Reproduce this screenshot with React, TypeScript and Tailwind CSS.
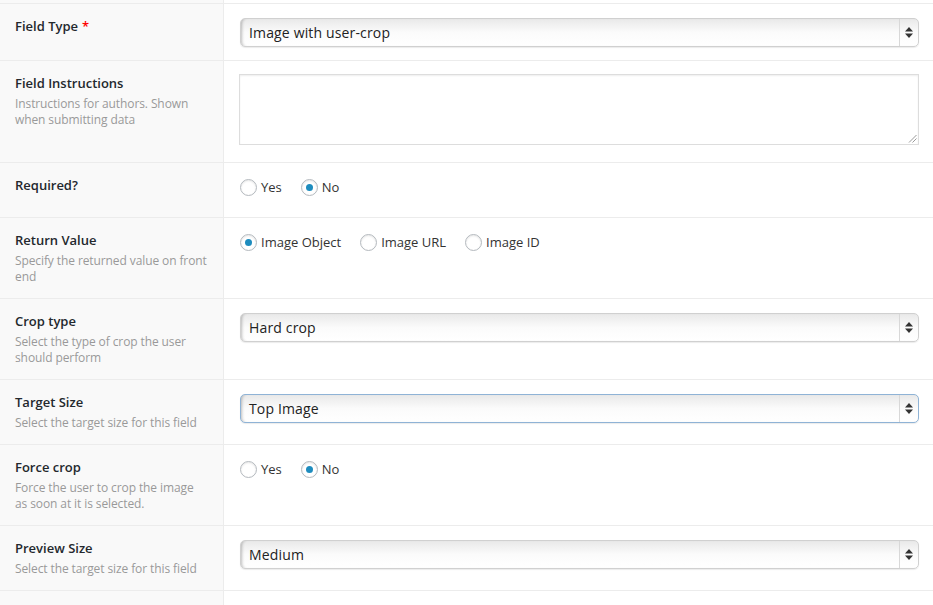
import React from "react";

const font = { fontFamily: '"Open Sans", "Liberation Sans", Arial, sans-serif' };

function Select({ value, focus }: { value: string; focus?: boolean }) {
  return (
    <div
      className={
        "flex h-[29px] w-[679px] items-stretch rounded-[5px] border bg-gradient-to-b from-[#e9e9e9] via-[#fbfbfb] to-[#ffffff] shadow-[inset_3px_0_3px_-2px_rgba(0,0,0,0.25),0_1px_1px_rgba(0,0,0,0.08)] " +
        (focus ? "border-[#8fb3d6] shadow-[0_0_2px_rgba(30,140,190,0.6)]" : "border-[#d0d0d0]")
      }
    >
      <div className="flex flex-1 items-center pb-[1px] pl-[8px] text-[14px] tracking-[0.15px] text-[#222]">{value}</div>
      <div className="flex w-[19px] flex-col items-center justify-center border-l border-[#d8d8d8]">
        <svg width="8" height="11" viewBox="0 0 8 11">
          <path d="M4 0 L8 4.5 L0 4.5 Z" fill="#333" />
          <path d="M0 6.5 L8 6.5 L4 11 Z" fill="#333" />
        </svg>
      </div>
    </div>
  );
}

function Radio({ label, checked }: { label: string; checked?: boolean }) {
  return (
    <div className="flex items-center gap-[4px]">
      <span className="flex h-[17px] w-[17px] items-center justify-center rounded-full border border-[#b4b9be] bg-white shadow-[inset_0_1px_2px_rgba(0,0,0,0.1)]">
        {checked && <span className="h-[7px] w-[7px] rounded-full bg-[#1e8cbe]" />}
      </span>
      <span className="text-[13px] text-[#333]">{label}</span>
    </div>
  );
}

type Row = {
  h: string;
  label: string;
  req?: boolean;
  desc?: string[];
  content: React.ReactNode;
  pt: string;
};

function RadioGroup({ items, checked }: { items: string[]; checked: number }) {
  return (
    <div className="flex items-center gap-[19px]">
      {items.map((t, i) => (
        <Radio key={t} label={t} checked={i === checked} />
      ))}
    </div>
  );
}

export default function App() {
  const rows: Row[] = [
    { h: "h-[56px]", label: "Field Type", req: true, pt: "pt-[14px]", content: <Select value="Image with user-crop" /> },
    {
      h: "h-[101px]",
      label: "Field Instructions",
      desc: ["Instructions for authors. Shown", "when submitting data"],
      pt: "pt-[13px]",
      content: (
        <div className="relative -ml-px h-[71px] w-[680px] border border-[#dddddd] bg-white shadow-[inset_0_1px_2px_rgba(0,0,0,0.07)]">
          <svg className="absolute bottom-[1px] right-[1px]" width="9" height="9" viewBox="0 0 9 9">
            <path d="M8.5 1 L1 8.5 M8.5 4.5 L4.5 8.5" stroke="#999" strokeWidth="1" />
          </svg>
        </div>
      ),
    },
    { h: "h-[54px]", label: "Required?", pt: "pt-[15px]", content: <RadioGroup items={["Yes", "No"]} checked={1} /> },
    {
      h: "h-[80px]",
      label: "Return Value",
      desc: ["Specify the returned value on front", "end"],
      pt: "pt-[15px]",
      content: <RadioGroup items={["Image Object", "Image URL", "Image ID"]} checked={0} />,
    },
    {
      h: "h-[80px]",
      label: "Crop type",
      desc: ["Select the type of crop the user", "should perform"],
      pt: "pt-[14px]",
      content: <Select value="Hard crop" />,
    },
    {
      h: "h-[64px]",
      label: "Target Size",
      desc: ["Select the target size for this field"],
      pt: "pt-[14px]",
      content: <Select value="Top Image" focus />,
    },
    {
      h: "h-[80px]",
      label: "Force crop",
      desc: ["Force the user to crop the image", "as soon at it is selected."],
      pt: "pt-[15px]",
      content: <RadioGroup items={["Yes", "No"]} checked={1} />,
    },
    {
      h: "h-[64px]",
      label: "Preview Size",
      desc: ["Select the target size for this field"],
      pt: "pt-[14px]",
      content: <Select value="Medium" />,
    },
  ];

  return (
    <div className="h-[605px] w-[933px] overflow-hidden bg-white" style={font}>
      <div className="flex h-[3px]">
        <div className="w-[224px] border-r border-[#ececec] bg-[#f9f9f9]" />
        <div className="flex-1" />
      </div>
      {rows.map((r) => (
        <div key={r.label} className={"flex border-t border-[#ececec] box-content " + r.h}>
          <div className="w-[224px] shrink-0 border-r border-[#ececec] bg-[#f9f9f9] px-[15px] pt-[13px]">
            <div className="text-[13px] font-semibold leading-[18px] text-[#23282d]">
              {r.label}
              {r.req && <span className="ml-[4px] text-[#ff0000]">*</span>}
            </div>
            {r.desc && (
              <div className="mt-[4px] whitespace-nowrap text-[12px] leading-[16px] tracking-[-0.1px] text-[#999]">
                {r.desc.map((d) => (
                  <div key={d}>{d}</div>
                ))}
              </div>
            )}
          </div>
          <div className={"flex-1 pl-[16px] " + r.pt}>{r.content}</div>
        </div>
      ))}
      <div className="flex h-[20px] border-t border-[#ececec]">
        <div className="w-[224px] border-r border-[#ececec] bg-[#f9f9f9]" />
        <div className="flex-1" />
      </div>
    </div>
  );
}
